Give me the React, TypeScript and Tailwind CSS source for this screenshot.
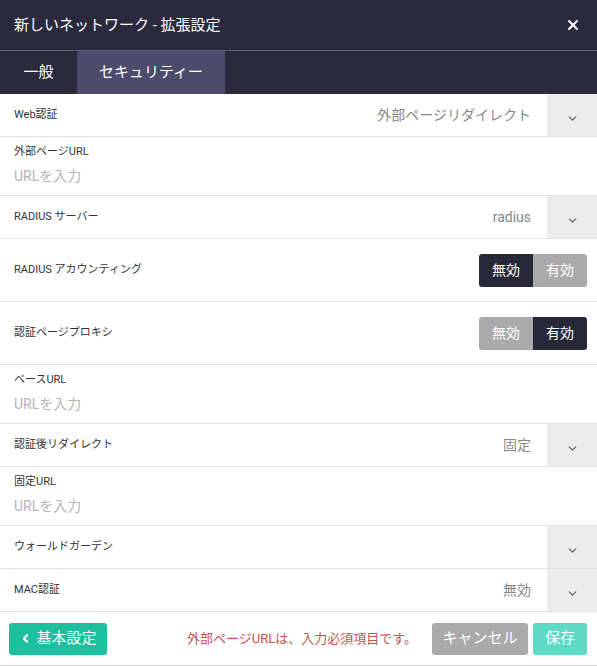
import { X, ChevronDown, ChevronLeft } from 'lucide-react';

const font = { fontFamily: "Roboto, 'Noto Sans CJK JP', sans-serif" };

const SelectRow = ({ label, value }: { label: string; value?: string }) => (
  <div className="flex h-[43px] items-stretch border-b border-[#e3e3e3]">
    <div className="flex flex-1 items-center justify-between pl-[14px] pr-[16px]">
      <span className="text-[11px] text-[#333]">{label}</span>
      {value && <span className="text-[14px] text-[#888]">{value}</span>}
    </div>
    <div className="flex w-[50px] items-center justify-center bg-[#ececec]">
      <ChevronDown className="mt-[6px] h-[13px] w-[13px] text-[#666]" strokeWidth={2.5} />
    </div>
  </div>
);

const InputRow = ({ label }: { label: string }) => (
  <div className="flex h-[59px] flex-col border-b border-[#e3e3e3] px-[14px] pt-[7px]">
    <span className="text-[11px] leading-[16px] text-[#333]">{label}</span>
    <span className="mt-[6px] text-[14px] leading-[20px] text-[#b5b5b5]">URLを入力</span>
  </div>
);

const ToggleRow = ({ label, on }: { label: string; on: boolean }) => (
  <div className="flex h-[63px] items-center justify-between border-b border-[#e3e3e3] pl-[14px] pr-[10px]">
    <span className="text-[11px] text-[#333]">{label}</span>
    <div className="flex h-[33px] overflow-hidden rounded-[3px] text-[14px] text-white">
      <div className={`flex w-[54px] items-center justify-center ${on ? 'bg-[#aaaaaa]' : 'bg-[#272838]'}`}>無効</div>
      <div className={`flex w-[54px] items-center justify-center ${on ? 'bg-[#272838]' : 'bg-[#aaaaaa]'}`}>有効</div>
    </div>
  </div>
);

const App = () => {
  return (
    <div className="flex h-[666px] w-[597px] flex-col bg-white" style={font}>
      <div className="flex h-[51px] items-center justify-between border-b border-[#5e5f70] bg-[#2a2a3c] pl-[14px] pr-[16px]">
        <span className="text-[15px] text-white">新しいネットワーク - 拡張設定</span>
        <X className="h-[16px] w-[16px] text-white" strokeWidth={3} />
      </div>
      <div className="flex h-[43px] bg-[#2a2a3c] text-[15px] text-white">
        <div className="flex w-[77px] items-center justify-center">一般</div>
        <div className="flex w-[148px] items-center justify-center bg-[#4b4c6b]">セキュリティー</div>
      </div>
      <SelectRow label="Web認証" value="外部ページリダイレクト" />
      <InputRow label="外部ページURL" />
      <SelectRow label="RADIUS サーバー" value="radius" />
      <ToggleRow label="RADIUS アカウンティング" on={false} />
      <ToggleRow label="認証ページプロキシ" on={true} />
      <InputRow label="ベースURL" />
      <SelectRow label="認証後リダイレクト" value="固定" />
      <InputRow label="固定URL" />
      <SelectRow label="ウォールドガーデン" />
      <SelectRow label="MAC認証" value="無効" />
      <div className="flex h-[54px] items-center border-b border-[#cfcfcf] pl-[9px] pr-[10px]">
        <button className="flex h-[32px] w-[98px] items-center justify-center gap-[4px] rounded-[3px] bg-[#1dbf9f] text-[15px] text-white">
          <ChevronLeft className="h-[13px] w-[13px]" strokeWidth={4} />
          基本設定
        </button>
        <span className="ml-[80px] text-[13px] text-[#c9504f]">外部ページURLは、入力必須項目です。</span>
        <div className="ml-auto flex gap-[5px]">
          <button className="h-[32px] w-[96px] rounded-[3px] bg-[#aaaaaa] text-[15px] text-white">キャンセル</button>
          <button className="h-[32px] w-[54px] rounded-[3px] bg-[#5fd8c4] text-[15px] text-white">保存</button>
        </div>
      </div>
    </div>
  );
};

export default App;
